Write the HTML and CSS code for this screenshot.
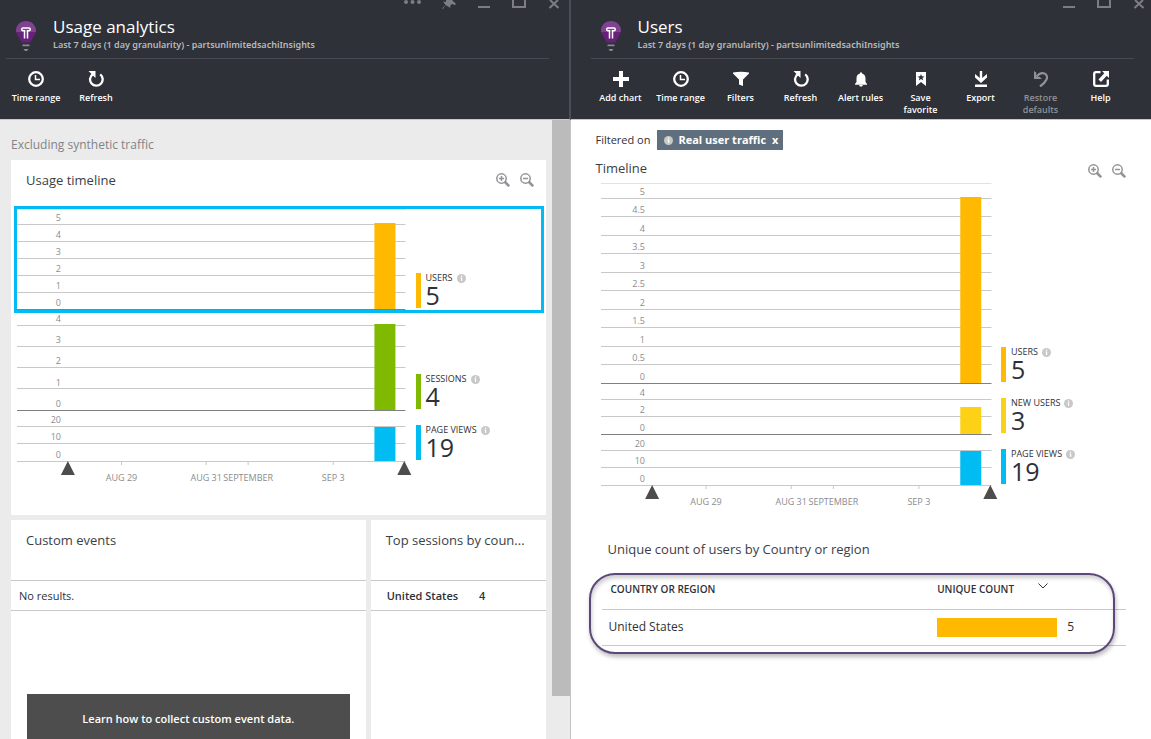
FILE: index.html
```html
<!DOCTYPE html>
<html lang="en">
<head>
<meta charset="utf-8">
<title>Usage analytics</title>
<link rel="stylesheet" href="styles.css">
</head>
<body>
<svg class="defs" aria-hidden="true">
  <defs>
    <linearGradient id="bulb-fill" x1="0" y1="0" x2="0" y2="1">
      <stop offset="0.5" stop-color="#804291"/><stop offset="0.5" stop-color="#68217a"/>
    </linearGradient>
  </defs>
  <symbol id="bulb" viewBox="0 0 20 30">
    <path d="M10 0C4.500 0 0 4.200 0 9.500c0 4.700 4.500 7.500 5.500 12h9C15.500 17 20 14.200 20 9.500 20 4.200 15.500 0 10 0z" fill="url(#bulb-fill)"/>
    <path d="M8.500 17.500V9.800H6.800A1.500 1.500 0 0 1 6.800 6.900H13.200A1.500 1.500 0 0 1 13.200 9.800H11.500V17.500" fill="none" stroke="#fff" stroke-width="1.500"/>
    <path d="M6.500 23.500h7v1.800h-7zM7.500 28h5l-1.500 2H9z" fill="#8b8b8d"/>
  </symbol>
  <symbol id="clock" viewBox="0 0 16 16"><circle cx="8" cy="8" r="6.800" fill="none" stroke="#fff" stroke-width="2.300"/><path d="M7.500 4v4.500H12" fill="none" stroke="#fff" stroke-width="1.500"/></symbol>
  <symbol id="refresh" viewBox="0 0 16 16"><path d="M4.800 3.200A6.300 6.300 0 1 0 12.200 3.400" fill="none" stroke="#fff" stroke-width="2.300"/><path d="M.5 0h7v7z" fill="#fff"/></symbol>
  <symbol id="plus" viewBox="0 0 16 16"><path d="M6 0h4v6h6v4h-6v6H6v-6H0V6h6z" fill="#fff"/></symbol>
  <symbol id="funnel" viewBox="0 0 16 16"><path d="M0 1.500Q8 0 16 1.500v1L10 8.500V15l-4-1.500v-5L0 2.500z" fill="#fff"/></symbol>
  <symbol id="bell" viewBox="0 0 16 16"><path d="M7 1.500h2v1c2.500.6 3.500 2.500 3.500 5V11l1.500 2v.7H2V13l1.500-2V7.500c0-2.500 1-4.400 3.500-5zM6 14h4l-1 1.500H7z" fill="#fff"/></symbol>
  <symbol id="bookmark" viewBox="0 0 16 16"><path d="M3 1h10v14l-5-4-5 4z" fill="#fff"/><path d="M8 3l.9 2.300 2.600.1-2 1.600.7 2.500L8 8.100 5.800 9.500 6.500 7l-2-1.600 2.600-.1z" fill="#2e3138"/></symbol>
  <symbol id="download" viewBox="0 0 16 16"><path d="M6.800 0h2.400v7l4.800-4v3.500L8 12 2 6.500V3l4.800 4zM2 13.500h12V16H2z" fill="#fff"/></symbol>
  <symbol id="undo" viewBox="0 0 16 16"><path d="M3.500 5.500C9-1 16 3 13.500 8.500 12.500 10.500 10.500 13 7 15.500" fill="none" stroke="#909296" stroke-width="2.200"/><path d="M1 0v8h8L6.500 5.800H3.200V1.500z" fill="#909296"/></symbol>
  <symbol id="external" viewBox="0 0 16 16"><path d="M7.500 1.200H3a1.800 1.800 0 0 0-1.800 1.800v10A1.800 1.800 0 0 0 3 14.800h10a1.800 1.800 0 0 0 1.800-1.800V8.500" fill="none" stroke="#fff" stroke-width="2.300"/><path d="M9 0h7v7l-2.300-2.300L8 11 5.500 8.500 11.300 2.300z" fill="#fff"/></symbol>
  <symbol id="zoom-in" viewBox="0 0 14 14"><path d="M8.500 8.500l4.700 4.700" stroke="#929497" stroke-width="2.600"/><circle cx="5.500" cy="5.500" r="4.700" fill="none" stroke="#929497" stroke-width="1.500"/><path d="M3 5.500h5M5.500 3v5" stroke="#929497" stroke-width="1.500"/></symbol>
  <symbol id="zoom-out" viewBox="0 0 14 14"><path d="M8.500 8.500l4.700 4.700" stroke="#929497" stroke-width="2.600"/><circle cx="5.500" cy="5.500" r="4.700" fill="none" stroke="#929497" stroke-width="1.500"/><path d="M3 5.500h5" stroke="#929497" stroke-width="1.500"/></symbol>
  <symbol id="info" viewBox="0 0 9 9"><circle cx="4.500" cy="4.500" r="4.500" fill="#c8c8c8"/><path d="M4 1.500h1.200v1.200H4zM3.500 3.600h1.700V7H4V4.400h-.5z" fill="#fff"/></symbol>
  <symbol id="more" viewBox="0 0 18 9"><g fill="#7c7e83"><circle cx="3" cy="2" r="2"/><circle cx="9.500" cy="2" r="2"/><circle cx="16" cy="2" r="2"/></g></symbol>
  <symbol id="pin" viewBox="0 0 14 9"><path d="M4 0l6 0 4 4-1 1-3-1-2 2 .5 2-5-3L1 9 0 8.500 3.500 5 1 1.500l3 .5z" fill="#7c7e83"/></symbol>
  <symbol id="minimize" viewBox="0 0 14 9"><path d="M1 6h12v2H1z" fill="#7c7e83"/></symbol>
  <symbol id="maximize" viewBox="0 0 14 9"><path d="M1 0v7h12V0" fill="none" stroke="#7c7e83" stroke-width="2"/></symbol>
  <symbol id="close" viewBox="0 0 14 9"><path d="M3 0l8.500 8M11 0L2.500 8" stroke="#7c7e83" stroke-width="2"/></symbol>
</svg>

<main class="portal">
  <section class="blade blade-usage">
    <header class="blade-head">
      <div class="window-bar">
        <button class="win" aria-label="More"><svg class="win-more"><use href="#more"/></svg></button>
        <button class="win" aria-label="Pin"><svg><use href="#pin"/></svg></button>
        <button class="win" aria-label="Minimize"><svg><use href="#minimize"/></svg></button>
        <button class="win" aria-label="Maximize"><svg><use href="#maximize"/></svg></button>
        <button class="win" aria-label="Close"><svg><use href="#close"/></svg></button>
      </div>
      <div class="title-row">
        <svg class="bulb"><use href="#bulb"/></svg>
        <div>
          <h1>Usage analytics</h1>
          <p class="subtitle">Last 7 days (1 day granularity) - partsunlimitedsachiInsights</p>
        </div>
      </div>
      <nav class="toolbar">
        <button class="tool"><svg><use href="#clock"/></svg>Time range</button>
        <button class="tool"><svg><use href="#refresh"/></svg>Refresh</button>
      </nav>
    </header>
    <div class="scroller">
      <div class="usage-body">
        <p class="notice">Excluding synthetic traffic</p>
        <section class="card timeline-card">
          <div class="card-title">
            <h2>Usage timeline</h2>
            <div class="zoomers">
              <button aria-label="Zoom in"><svg><use href="#zoom-in"/></svg></button>
              <button aria-label="Zoom out"><svg><use href="#zoom-out"/></svg></button>
            </div>
          </div>
          <div class="charts">
            <div class="chart selected">
              <svg class="plot plot-m">
                <line class="edge" x2="100%" y1="0.500" y2="0.500"/>
                <line x2="100%" y1="15.500" y2="15.500"/><line x2="100%" y1="32.500" y2="32.500"/><line x2="100%" y1="49.500" y2="49.500"/><line x2="100%" y1="66.500" y2="66.500"/><line x2="100%" y1="83.500" y2="83.500"/>
                <rect class="users" x="92%" y="14" width="21" height="86"/>
                <line class="base" x2="100%" y1="100.500" y2="100.500"/>
                <text x="44" y="12">5</text><text x="44" y="29">4</text><text x="44" y="46">3</text><text x="44" y="63">2</text><text x="44" y="80">1</text><text x="44" y="97">0</text>
              </svg>
              <div class="legend lg-users"><span class="name">USERS <svg><use href="#info"/></svg></span><strong>5</strong></div>
            </div>
            <div class="chart">
              <svg class="plot plot-m">
                <line x2="100%" y1="15.500" y2="15.500"/><line x2="100%" y1="36.500" y2="36.500"/><line x2="100%" y1="57.500" y2="57.500"/><line x2="100%" y1="78.500" y2="78.500"/>
                <rect class="sessions" x="92%" y="14" width="21" height="86"/>
                <line class="base" x2="100%" y1="100.500" y2="100.500"/>
                <text x="44" y="12">4</text><text x="44" y="33">3</text><text x="44" y="54">2</text><text x="44" y="76">1</text><text x="44" y="97">0</text>
              </svg>
              <div class="legend lg-sessions"><span class="name">SESSIONS <svg><use href="#info"/></svg></span><strong>4</strong></div>
            </div>
            <div class="chart">
              <svg class="plot plot-s">
                <line x2="100%" y1="15.500" y2="15.500"/><line x2="100%" y1="32.500" y2="32.500"/>
                <rect class="views" x="92%" y="16" width="21" height="34"/>
                <line x2="100%" y1="50.500" y2="50.500"/>
                <text x="44" y="12">20</text><text x="44" y="29">10</text><text x="44" y="47">0</text>
              </svg>
              <div class="legend lg-views"><span class="name">PAGE VIEWS <svg><use href="#info"/></svg></span><strong>19</strong></div>
            </div>
            <div class="chart">
              <svg class="axis">
                <line x1="26.900%" x2="26.900%" y2="3"/><line x1="48.700%" x2="48.700%" y2="3"/><line x1="59.500%" x2="59.500%" y2="3"/><line x1="81.400%" x2="81.400%" y2="3"/>
                <svg x="13.100%" overflow="visible"><path d="M0-1l7 14H-7z"/></svg>
                <svg x="99.700%" overflow="visible"><path d="M0-1l7 14H-7z"/></svg>
                <text x="26.900%" y="19">AUG 29</text><text x="48.700%" y="19">AUG 31</text><text x="59.500%" y="19">SEPTEMBER</text><text x="81.400%" y="19">SEP 3</text>
              </svg>
            </div>
          </div>
        </section>
        <div class="tiles">
          <section class="card tile">
            <h2>Custom events</h2>
            <p class="tile-row empty">No results.</p>
            <button class="learn">Learn how to collect custom event data.</button>
          </section>
          <section class="card tile">
            <h2>Top sessions by coun...</h2>
            <p class="tile-row"><b>United States</b><b>4</b></p>
          </section>
        </div>
      </div>
      <div class="scrollbar"><div class="thumb"></div></div>
    </div>
  </section>

  <section class="blade blade-users">
    <header class="blade-head">
      <div class="window-bar">
        <button class="win" aria-label="Minimize"><svg><use href="#minimize"/></svg></button>
        <button class="win" aria-label="Maximize"><svg><use href="#maximize"/></svg></button>
        <button class="win" aria-label="Close"><svg><use href="#close"/></svg></button>
      </div>
      <div class="title-row">
        <svg class="bulb"><use href="#bulb"/></svg>
        <div>
          <h1>Users</h1>
          <p class="subtitle">Last 7 days (1 day granularity) - partsunlimitedsachiInsights</p>
        </div>
      </div>
      <nav class="toolbar">
        <button class="tool"><svg><use href="#plus"/></svg>Add chart</button>
        <button class="tool"><svg><use href="#clock"/></svg>Time range</button>
        <button class="tool"><svg><use href="#funnel"/></svg>Filters</button>
        <button class="tool"><svg><use href="#refresh"/></svg>Refresh</button>
        <button class="tool"><svg><use href="#bell"/></svg>Alert rules</button>
        <button class="tool"><svg><use href="#bookmark"/></svg>Save<br>favorite</button>
        <button class="tool"><svg><use href="#download"/></svg>Export</button>
        <button class="tool" disabled><svg><use href="#undo"/></svg>Restore<br>defaults</button>
        <button class="tool"><svg><use href="#external"/></svg>Help</button>
      </nav>
    </header>
    <div class="users-body">
      <div class="filter">Filtered on
        <button class="chip"><svg><use href="#info"/></svg>Real user traffic<span>x</span></button>
      </div>
      <div class="timeline-title">
        <h2>Timeline</h2>
        <div class="zoomers">
          <button aria-label="Zoom in"><svg><use href="#zoom-in"/></svg></button>
          <button aria-label="Zoom out"><svg><use href="#zoom-out"/></svg></button>
        </div>
      </div>
      <div class="charts">
        <div class="chart">
          <svg class="plot plot-l">
            <line class="edge" x2="100%" y1="0.500" y2="0.500"/>
            <line x2="100%" y1="15.500" y2="15.500"/><line x2="100%" y1="33.500" y2="33.500"/><line x2="100%" y1="52.500" y2="52.500"/><line x2="100%" y1="70.500" y2="70.500"/><line x2="100%" y1="89.500" y2="89.500"/><line x2="100%" y1="107.500" y2="107.500"/><line x2="100%" y1="126.500" y2="126.500"/><line x2="100%" y1="144.500" y2="144.500"/><line x2="100%" y1="163.500" y2="163.500"/><line x2="100%" y1="181.500" y2="181.500"/>
            <rect class="users" x="92%" y="14" width="21" height="186"/>
            <line class="base" x2="100%" y1="200.500" y2="200.500"/>
            <text x="44" y="12">5</text><text x="44" y="30">4.5</text><text x="44" y="49">4</text><text x="44" y="67">3.5</text><text x="44" y="86">3</text><text x="44" y="104">2.5</text><text x="44" y="123">2</text><text x="44" y="141">1.5</text><text x="44" y="160">1</text><text x="44" y="178">0.5</text><text x="44" y="197">0</text>
          </svg>
          <div class="legend lg-users"><span class="name">USERS <svg><use href="#info"/></svg></span><strong>5</strong></div>
        </div>
        <div class="chart">
          <svg class="plot plot-s">
            <line x2="100%" y1="15.500" y2="15.500"/><line x2="100%" y1="32.500" y2="32.500"/>
            <rect class="new-users" x="92%" y="23" width="21" height="27"/>
            <line class="base" x2="100%" y1="50.500" y2="50.500"/>
            <text x="44" y="12">4</text><text x="44" y="29">2</text><text x="44" y="47">0</text>
          </svg>
          <div class="legend lg-new"><span class="name">NEW USERS <svg><use href="#info"/></svg></span><strong>3</strong></div>
        </div>
        <div class="chart">
          <svg class="plot plot-s">
            <line x2="100%" y1="15.500" y2="15.500"/><line x2="100%" y1="32.500" y2="32.500"/>
            <rect class="views" x="92%" y="16" width="21" height="34"/>
            <line x2="100%" y1="50.500" y2="50.500"/>
            <text x="44" y="12">20</text><text x="44" y="29">10</text><text x="44" y="47">0</text>
          </svg>
          <div class="legend lg-views"><span class="name">PAGE VIEWS <svg><use href="#info"/></svg></span><strong>19</strong></div>
        </div>
        <div class="chart">
          <svg class="axis">
            <line x1="26.900%" x2="26.900%" y2="3"/><line x1="48.700%" x2="48.700%" y2="3"/><line x1="59.500%" x2="59.500%" y2="3"/><line x1="81.400%" x2="81.400%" y2="3"/>
            <svg x="13.100%" overflow="visible"><path d="M0-1l7 14H-7z"/></svg>
            <svg x="99.700%" overflow="visible"><path d="M0-1l7 14H-7z"/></svg>
            <text x="26.900%" y="19">AUG 29</text><text x="48.700%" y="19">AUG 31</text><text x="59.500%" y="19">SEPTEMBER</text><text x="81.400%" y="19">SEP 3</text>
          </svg>
        </div>
      </div>
      <h2 class="regions-title">Unique count of users by Country or region</h2>
      <div class="regions">
        <table>
          <thead><tr><th class="region">COUNTRY OR REGION</th><th><span class="sort">UNIQUE COUNT <svg viewBox="0 0 10 6"><path d="M.5.500L5 5 9.500.500" fill="none" stroke="#333"/></svg></span></th></tr></thead>
          <tbody><tr><td>United States</td><td><span class="count"><i></i>5</span></td></tr></tbody>
        </table>
        <div class="callout"></div>
      </div>
    </div>
  </section>
</main>
</body>
</html>
```
FILE: styles.css
```css
* { box-sizing: border-box; }
body {
  margin: 0;
  font: 12px/20px "Open Sans", "Noto Sans", sans-serif;
  color: #2e3138;
  background: #fff;
}
h1, h2, p { margin: 0; font-weight: 400; }
button { margin: 0; padding: 0; border: 0; background: none; font: inherit; color: inherit; }
svg { display: block; }
.defs { position: absolute; width: 0; height: 0; }

.portal { display: flex; height: 100vh; overflow: hidden; }
.blade { display: flex; flex-direction: column; min-width: 0; }
.blade-usage { flex: 570 1 0; border-right: 1px solid #c4c4c4; }
.blade-users { flex: 581 1 0; }

.blade-head {
  position: relative;
  flex: none;
  height: 120px;
  padding: 0 20px 0 6px;
  background: #2e3138;
  color: #fff;
  border-bottom: 1px solid #c8c8c8;
}
.blade-usage .blade-head { margin-right: -1px; border-right: 2px solid #4b4e56; }
.blade-users .blade-head { padding: 0 17px 0 20px; }
.window-bar { display: flex; justify-content: flex-end; gap: 21px; height: 14px; margin-right: -12px; }
.win svg { width: 14px; height: 9px; }
.win { height: 9px; }
.win .win-more { width: 18px; }
.title-row { display: flex; gap: 17px; height: 45px; padding: 3px 0 0 10px; border-bottom: 1px solid #474a52; }
.bulb { width: 20px; height: 30px; margin-top: 4px; }
h1 { font-size: 17px; line-height: 20px; }
.subtitle { font-family: "Noto Sans", "Open Sans", sans-serif; font-size: 9px; line-height: 16px; font-weight: 600; color: #b8babd; }
.toolbar { display: flex; padding-top: 12px; }
.tool { flex: 0 0 60px; display: flex; flex-direction: column; align-items: center; font-size: 9px; line-height: 12px; font-weight: 600; text-align: center; }
.tool svg { width: 16px; height: 16px; margin-bottom: 5px; }
.tool:disabled { color: #909296; }

.scroller { flex: 1; min-height: 0; display: flex; background: #ebebeb; }
.usage-body { flex: 1; min-width: 0; padding: 15px 6px 0 11px; overflow: hidden; }
.scrollbar { flex: 0 0 18px; background: #ebebeb; }
.thumb { height: 93%; background: #bbb; }
.notice { font-size: 12px; margin-bottom: 5px; color: #828488; }
.card { background: #fff; }
h2 { font-size: 13px; line-height: 20px; color: #3b3e45; }
.timeline-card { height: 355px; margin-bottom: 5px; }
.card-title { display: flex; justify-content: space-between; height: 49px; padding: 10px 12px 0 15px; }
.zoomers { display: flex; align-items: flex-start; gap: 10px; padding-top: 3px; }
.zoomers svg { width: 14px; height: 14px; }
.timeline-card .charts { padding: 0 5px 0 6px; }

.chart { display: grid; grid-template-columns: minmax(0, 1fr) 125px; column-gap: 10px; }
.selected { position: relative; z-index: 1; outline: 3px solid #00bcf2; }
.plot, .axis { width: 100%; overflow: visible; }
.plot-s { height: 51px; }
.plot-m { height: 101px; }
.plot-l { height: 201px; }
.axis { height: 26px; }
.plot line, .axis line { stroke: #c8c8c8; }
.plot .edge { stroke: #e2e2e2; }
.plot .base { stroke: #808080; }
.plot text, .axis text { font-size: 9px; fill: #8a8c90; }
.plot text { text-anchor: end; }
.axis text { text-anchor: middle; }
.axis path { fill: #4d4d4d; }
.users { fill: #ffb900; }
.sessions { fill: #7fba00; }
.views { fill: #00bcf2; }
.new-users { fill: #fcd116; }
.legend { align-self: end; height: 35px; margin-bottom: 2px; padding-left: 5px; border-left: 5px solid; color: #2e3138; }
.name { display: flex; align-items: center; gap: 4px; font-size: 9px; line-height: 10px; }
.name svg { width: 9px; height: 9px; }
.legend strong { display: block; font-size: 25px; line-height: 24px; font-weight: 500; }
.lg-users { border-color: #ffb900; }
.lg-sessions { border-color: #7fba00; }
.lg-views { border-color: #00bcf2; }
.lg-new { border-color: #fcd116; }

.tiles { display: grid; grid-template-columns: minmax(0, 355fr) minmax(0, 175fr); gap: 5px; }
.tile { height: 240px; }
.tile h2 { height: 60px; padding: 10px 15px 0; white-space: nowrap; overflow: hidden; }
.tile-row { display: flex; gap: 21px; padding: 5px 16px 4px; border: solid #c8c8c8; border-width: 1px 0; font-size: 11px; }
.tile-row b { font-weight: 600; }
.empty { padding-left: 8px; }
.learn { display: block; width: calc(100% - 32px); height: 50px; margin: 83px 16px 0; background: #4d4d4d; color: #fff; font-size: 11px; font-weight: 600; }

.users-body { padding: 10px 25px 0; }
.filter { display: flex; align-items: center; gap: 7px; font-size: 11px; }
.chip { display: flex; align-items: center; height: 20px; padding: 0 5px 0 7px; background: #5f6f7e; color: #fff; font-weight: 700; }
.chip svg { width: 9px; height: 9px; margin-right: 5px; }
.chip span { margin-left: 6px; }
.timeline-title { display: flex; justify-content: space-between; height: 33px; padding-top: 8px; }
.timeline-title .zoomers { padding-top: 6px; }
.users-body .charts { padding-left: 5px; }
.regions-title { margin: 27px 0 11px 12px; }
.regions { position: relative; margin-left: 6px; }
table { width: 100%; border-collapse: collapse; table-layout: fixed; }
th, td { padding: 0; text-align: left; border-bottom: 1px solid #c8c8c8; }
th { height: 39px; padding-left: 9px; font-size: 10px; font-weight: 600; }
.region { width: 64%; }
td { height: 36px; padding-left: 7px; font-size: 12px; }
th + th, td + td { padding-left: 0; }
.sort { display: flex; align-items: center; gap: 24px; }
.sort svg { width: 10px; height: 6px; margin-bottom: 6px; }
.count { display: flex; align-items: center; gap: 10px; }
.count i { width: 120px; height: 19px; background: #ffb900; }
.callout { position: absolute; inset: 3px 11px -8px -13px; border: 2px solid #5c4778; border-radius: 26px; box-shadow: 1px 3px 4px #0004, inset 1px 3px 4px #0003; pointer-events: none; }
```
